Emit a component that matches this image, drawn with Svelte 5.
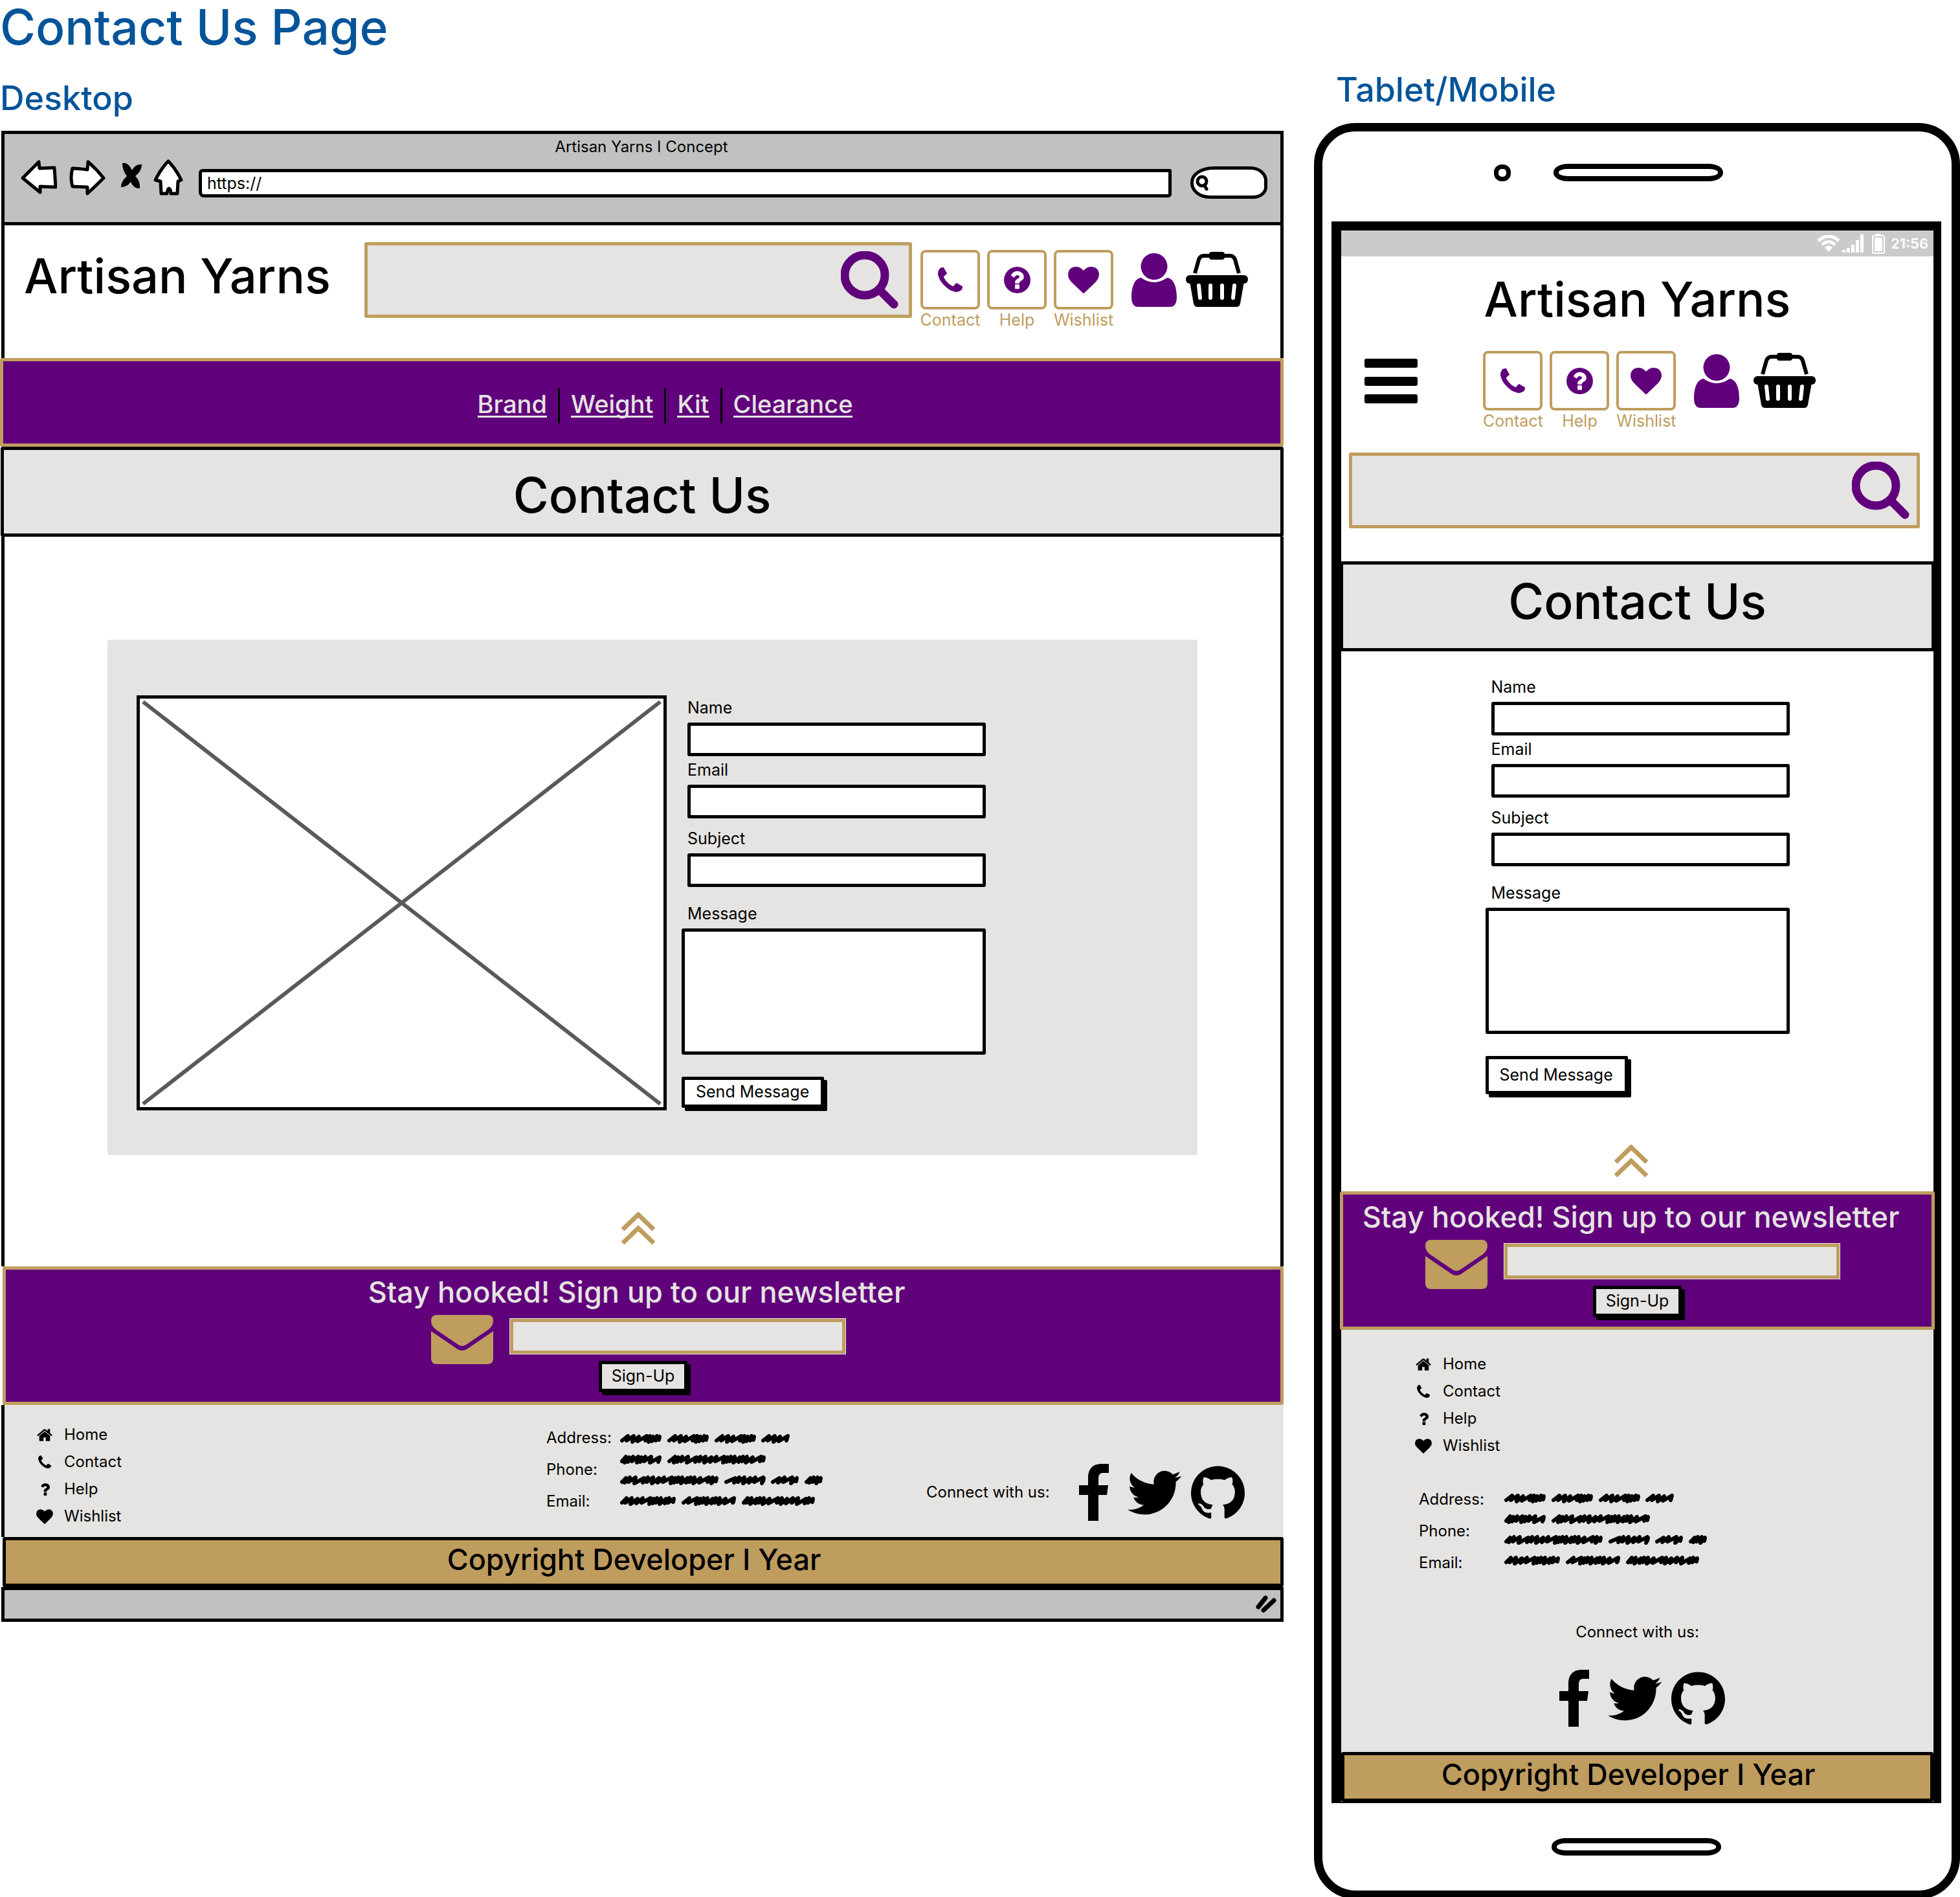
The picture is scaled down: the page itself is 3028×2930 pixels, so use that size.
<script>
  const fields = [
    { id: 'name', label: 'Name' },
    { id: 'email', label: 'Email' },
    { id: 'subject', label: 'Subject' }
  ];

  const footerLinks = [
    { icon: 'home', text: 'Home' },
    { icon: 'phone', text: 'Contact' },
    { icon: 'question', text: 'Help' },
    { icon: 'heart', text: 'Wishlist' }
  ];

  const iconButtons = [
    { icon: 'phone', text: 'Contact', cls: 'i-phone' },
    { icon: 'help', text: 'Help', cls: 'i-help' },
    { icon: 'heart', text: 'Wishlist', cls: 'i-heart' }
  ];

  const icons = {
    phone: {
      box: '192 128 1408 1408',
      d: 'M1600 1240q0 27-10 70.5t-21 68.5q-21 50-122 106-94 51-186 51-27 0-53-3.5t-57.5-12.5-47-14.5-55.5-20.5-49-18q-98-35-175-83-127-79-264-216t-216-264q-48-77-83-175-3-9-18-49t-20.5-55.5-14.5-47-12.5-57.5-3.5-53q0-92 51-186 56-101 106-122 25-11 68.5-21t70.5-10q14 0 21 3 18 6 53 76 11 19 30 54t35 63.5 31 53.5q3 4 17.5 25t21.5 35.5 7 28.5q0 20-28.5 50t-62 55-62 53-28.5 46q0 9 5 22.5t8.5 20.5 14 24 11.5 19q76 137 174 235t235 174q2 1 19 11.5t24 14 20.5 8.5 22.5 5q18 0 46-28.5t53-62 55-62 50-28.5q14 0 28.5 7t35.5 21.5 25 17.5q25 15 53.5 31t63.5 35 54 30q70 35 76 53 3 7 3 21z'
    },
    help: {
      box: '128 128 1536 1536',
      d: 'M1024 1376v-192q0-14-9-23t-23-9h-192q-14 0-23 9t-9 23v192q0 14 9 23t23 9h192q14 0 23-9t9-23zm256-672q0-88-55.5-163t-138.5-116-170-41q-243 0-371 213-15 24 8 42l132 100q7 6 19 6 16 0 25-12 53-68 86-92 34-24 86-24 48 0 85.5 26t37.5 59q0 38-20 61t-68 45q-63 28-115.5 86.5t-52.5 125.5v36q0 14 9 23t23 9h192q14 0 23-9t9-23q0-19 21.5-49.5t54.5-49.5q32-18 49-28.5t46-35 44.5-48 28-60.5 12.5-81zm384 192q0 209-103 385.5t-279.5 279.5-385.5 103-385.5-103-279.5-279.5-103-385.5 103-385.5 279.5-279.5 385.5-103 385.5 103 279.5 279.5 103 385.5z'
    },
    heart: {
      box: '0 128 1792 1536',
      d: 'M896 1664q-26 0-44-18l-624-602q-10-8-27.5-26t-55.5-65.5-68-97.5-53.5-121-23.5-138q0-220 127-344t351-124q62 0 126.5 21.5t120 58 95.5 68.5 76 68q36-36 76-68t95.5-68.5 120-58 126.5-21.5q224 0 351 124t127 344q0 221-229 450l-623 600q-18 18-44 18z'
    },
    home: {
      box: '64 192 1664 1344',
      d: 'M1472 992v480q0 26-19 45t-45 19h-384v-384h-256v384h-384q-26 0-45-19t-19-45v-480q0-1 .5-3t.5-3l575-474 575 474q1 2 1 6zm223-69l-62 74q-8 9-21 11h-3q-13 0-21-7l-692-577-692 577q-12 8-24 7-13-2-21-11l-62-74q-8-10-7-23.5t11-21.5l719-599q32-26 76-26t76 26l244 204v-195q0-14 9-23t23-9h192q14 0 23 9t9 23v408l219 182q10 8 11 21.5t-7 23.5z'
    },
    question: {
      box: '320 192 1152 1344',
      d: 'M1088 1256v240q0 16-12 28t-28 12h-240q-16 0-28-12t-12-28v-240q0-16 12-28t28-12h240q16 0 28 12t12 28zm316-600q0 54-15.5 101t-35 76.5-55 59.5-57.5 43.5-61 35.5q-41 23-68.5 65t-27.5 67q0 17-12 32.5t-28 15.5h-240q-15 0-25.5-18.5t-10.5-37.5v-45q0-83 65-156.5t143-108.5q59-27 84-56t25-76q0-42-46.5-74t-107.5-32q-65 0-108 29-35 25-107 115-13 16-31 16-12 0-25-8l-164-125q-13-10-15.5-25t5.5-28q160-266 464-266 80 0 161 31t146 83 106 127.5 41 158.5z'
    }
  };

  // Each scribbled word is [start, end]; one array for each line.
  const scribbleLines = [
    [[0, 64], [73, 137], [146, 210], [218, 261]],
    [[0, 64], [73, 225]],
    [[0, 152], [161, 225], [233, 276], [285, 313]],
    [[0, 86], [95, 179], [188, 301]]
  ];
  const steps = [9, 10, 9, 13, 6, 6, 7, 9, 6, 7, 10, 14, 7];

  function scribble(start, end, y, seed) {
    let x = start + 3;
    let d = `M${x} ${y + 10}`;
    let i = seed;
    while (x < end - 11) {
      const step = steps[i % steps.length];
      const lift = (i * 5) % 3;
      d += `L${x + step} ${y + 3 + (lift % 2)}L${x + step - 2} ${y + 10 + (lift % 3)}`;
      x += step - 1;
      i += 1;
    }
    d += `L${end - 3} ${y + 4}L${end - 4} ${y + 9}`;
    return d;
  }

  const scribblePath = scribbleLines
    .map((words, row) => words.map(([a, b], k) => scribble(a, b, row * 32, row === 0 ? 0 : row * 4 + k * 3)).join(''))
    .join('');
</script>

{#snippet glyph(name, cls)}
  <svg class={cls} viewBox={icons[name].box} aria-hidden="true"><path d={icons[name].d} fill="currentColor" /></svg>
{/snippet}

{#snippet searchBox(id)}
  <form class="search" role="search">
    <input {id} type="search" aria-label="Search products" />
    <button type="button" class="plain" aria-label="Search">
      <svg class="i-search" viewBox="0 0 89 89" aria-hidden="true">
        <circle cx="37" cy="37" r="31" fill="none" stroke="currentColor" stroke-width="13" />
        <path d="M62 62L82 82" stroke="currentColor" stroke-width="13" stroke-linecap="round" />
      </svg>
    </button>
  </form>
{/snippet}

{#snippet shortcuts()}
  <nav class="shortcuts" aria-label="Shortcuts">
    {#each iconButtons as item}
      <a class="shortcut" href="#top">
        <span class="tile">{@render glyph(item.icon, item.cls)}</span>
        <span class="caption">{item.text}</span>
      </a>
    {/each}
    <a class="account" href="#top" aria-label="Account">
      <svg class="i-user" viewBox="0 0 70 83" aria-hidden="true">
        <circle cx="35" cy="20.5" r="20.5" fill="currentColor" />
        <path d="M15 38Q35 52 55 38C66 39 70 54 70 68C70 78 66 83 60 83H10C4 83 0 78 0 68C0 54 4 39 15 38Z" fill="currentColor" />
      </svg>
    </a>
    <a class="basket" href="#top" aria-label="Basket">
      <svg class="i-basket" viewBox="0 0 96 85" aria-hidden="true">
        <path d="M14 33L20 12Q22 6 28 6H68Q74 6 76 12L82 33" fill="none" stroke="#000" stroke-width="6" />
        <rect x="36" y="0" width="24" height="12" rx="4" />
        <rect x="0" y="36" width="96" height="13" rx="6" />
        <path d="M6 46H90L84 80Q83 85 78 85H18Q13 85 12 80Z" />
        <path d="M20 52L22 71M38 52V71M56 52V71M75 52L73 71" stroke="#fff" stroke-width="6" stroke-linecap="round" />
      </svg>
    </a>
  </nav>
{/snippet}

{#snippet contactForm(prefix)}
  <form class="contact">
    {#each fields as field}
      <div class="field">
        <label for={`${prefix}-${field.id}`}>{field.label}</label>
        <input id={`${prefix}-${field.id}`} type="text" />
      </div>
    {/each}
    <div class="field message">
      <label for={`${prefix}-message`}>Message</label>
      <textarea id={`${prefix}-message`}></textarea>
    </div>
    <button type="button" class="push send">Send Message</button>
  </form>
{/snippet}

{#snippet toTop()}
  <a class="totop" href="#top" aria-label="Back to top">
    <svg class="i-up" viewBox="0 0 54 51" aria-hidden="true">
      <path d="M3 27L27 4L51 27M3 48L27 25L51 48" fill="none" stroke="currentColor" stroke-width="7" />
    </svg>
  </a>
{/snippet}

{#snippet newsletter(prefix)}
  <form class="newsletter">
    <label for={`${prefix}-newsletter`}>Stay hooked! Sign up to our newsletter</label>
    <div class="mailrow">
      <svg class="i-mail" viewBox="0 0 96 76" aria-hidden="true">
        <path d="M9 0H87Q96 0 96 9Q96 17 88 23L54 46Q48 50 42 46L8 23Q0 17 0 9Q0 0 9 0Z" fill="currentColor" />
        <path d="M0 25L41 53Q48 57 55 53L96 25V67Q96 76 87 76H9Q0 76 0 67Z" fill="currentColor" />
      </svg>
      <input id={`${prefix}-newsletter`} type="email" />
    </div>
    <button type="button" class="push signup">Sign-Up</button>
  </form>
{/snippet}

{#snippet siteLinks()}
  <ul class="links">
    {#each footerLinks as link}
      <li>
        <a href="#top"><span class="bullet">{@render glyph(link.icon, `s-${link.icon}`)}</span>{link.text}</a>
      </li>
    {/each}
  </ul>
{/snippet}

{#snippet details()}
  <div class="details">
    <div class="terms">
      <span>Address:</span>
      <span>Phone:</span>
      <span>Email:</span>
    </div>
    <svg class="scribbles" viewBox="0 0 314 112" aria-hidden="true">
      <path d={scribblePath} fill="none" stroke="#000" stroke-width="6" stroke-linecap="round" stroke-linejoin="round" />
    </svg>
  </div>
{/snippet}

{#snippet social()}
  <div class="social">
    <span>Connect with us:</span>
    <div class="networks">
      <a href="#top" aria-label="Facebook">
        <svg class="i-fb" viewBox="0 0 47 88" aria-hidden="true">
          <path d="M46 0H35C20 0 14 9 14 22V33H0V48H14V88H30V48H43L45 33H30V23C30 16 33 14 37 14H46Z" />
        </svg>
      </a>
      <a href="#top" aria-label="Twitter">
        <svg class="i-tw" viewBox="0 2.2 24 19.6" aria-hidden="true">
          <path d="M23.954 4.569c-.885.389-1.83.654-2.825.775 1.014-.611 1.794-1.574 2.163-2.723-.951.555-2.005.959-3.127 1.184-.896-.959-2.173-1.559-3.591-1.559-2.717 0-4.92 2.203-4.92 4.917 0 .39.045.765.127 1.124C7.691 8.094 4.066 6.13 1.64 3.161c-.427.722-.666 1.561-.666 2.475 0 1.71.87 3.213 2.188 4.096-.807-.026-1.566-.248-2.228-.616v.061c0 2.385 1.693 4.374 3.946 4.827-.413.111-.849.171-1.296.171-.314 0-.615-.03-.916-.086.631 1.953 2.445 3.377 4.604 3.417-1.68 1.319-3.809 2.105-6.102 2.105-.39 0-.779-.023-1.17-.067 2.189 1.394 4.768 2.209 7.557 2.209 9.054 0 13.999-7.496 13.999-13.986 0-.209 0-.42-.015-.63.961-.689 1.8-1.56 2.46-2.548l-.047-.02z" />
        </svg>
      </a>
      <a href="#top" aria-label="GitHub">
        <svg class="i-gh" viewBox="0 0.2 24 23.6" aria-hidden="true">
          <path d="M12 .297c-6.63 0-12 5.373-12 12 0 5.303 3.438 9.8 8.205 11.385.6.113.82-.258.82-.577 0-.285-.01-1.04-.015-2.04-3.338.724-4.042-1.61-4.042-1.61C4.422 18.07 3.633 17.7 3.633 17.7c-1.087-.744.084-.729.084-.729 1.205.084 1.838 1.236 1.838 1.236 1.07 1.835 2.809 1.305 3.495.998.108-.776.417-1.305.76-1.605-2.665-.3-5.466-1.332-5.466-5.93 0-1.31.465-2.38 1.235-3.22-.135-.303-.54-1.523.105-3.176 0 0 1.005-.322 3.3 1.23.96-.267 1.98-.399 3-.405 1.02.006 2.04.138 3 .405 2.28-1.552 3.285-1.23 3.285-1.23.645 1.653.24 2.873.12 3.176.765.84 1.23 1.91 1.23 3.22 0 4.61-2.805 5.625-5.475 5.92.42.36.81 1.096.81 2.22 0 1.606-.015 2.896-.015 3.286 0 .315.21.69.825.57C20.565 22.092 24 17.592 24 12.297c0-6.627-5.373-12-12-12" />
        </svg>
      </a>
    </div>
  </div>
{/snippet}

<div class="board" id="top">
  <section class="desktop">
    <h1>Contact Us Page</h1>
    <h2>Desktop</h2>
    <div class="window">
      <div class="chrome">
        <p class="tab">Artisan Yarns I Concept</p>
        <div class="toolbar">
          <div class="tools">
            <button type="button" class="plain" aria-label="Back">
              <svg class="c-back" viewBox="0 0 56 56" aria-hidden="true">
                <path d="M3 29L28 4L29 14L52 13L54 43L30 42V51Z" fill="#fff" stroke="#000" stroke-width="5" stroke-linejoin="round" />
              </svg>
            </button>
            <button type="button" class="plain" aria-label="Forward">
              <svg class="c-forward" viewBox="0 0 58 56" aria-hidden="true">
                <path d="M6 14Q2 28 6 42L29 43V53Q42 41 54 29Q43 15 30 4L29 16Q12 14 6 14Z" fill="#fff" stroke="#000" stroke-width="5" stroke-linejoin="round" />
              </svg>
            </button>
            <button type="button" class="plain" aria-label="Stop">
              <svg class="c-stop" viewBox="0 0 32 56" aria-hidden="true">
                <path d="M2 6Q11 4 17 17Q22 7 32 8Q32 18 22 26Q30 34 29 45Q19 45 15 35Q9 43 0 43Q0 34 9 26Q2 17 2 6Z" />
              </svg>
            </button>
            <button type="button" class="plain" aria-label="Home page">
              <svg class="c-home" viewBox="0 0 46 56" aria-hidden="true">
                <path d="M23 3Q12 14 3 32L11 34L12 53H21Q22 45 24 45Q27 46 27 53H37L38 34L43 32Q34 14 23 3Z" fill="#fff" stroke="#000" stroke-width="5" stroke-linejoin="round" />
              </svg>
            </button>
          </div>
          <input class="url" type="text" value="https://" aria-label="Address bar" />
          <div class="pill">
            <svg class="c-search" viewBox="0 0 24 28" aria-hidden="true">
              <path d="M13 15L18 24" stroke="#000" stroke-width="5" stroke-linecap="round" />
              <circle cx="11" cy="12" r="7" fill="#fff" stroke="#000" stroke-width="5" />
            </svg>
            <input type="search" aria-label="Web search" />
          </div>
        </div>
      </div>

      <header class="masthead">
        <div class="brand">Artisan Yarns</div>
        {@render searchBox('desktop-search')}
        {@render shortcuts()}
      </header>

      <nav class="menu" aria-label="Categories">
        <a href="#top">Brand</a>
        <a href="#top">Weight</a>
        <a href="#top">Kit</a>
        <a href="#top">Clearance</a>
      </nav>

      <h3 class="heading">Contact Us</h3>

      <main class="content">
        <div class="panel">
          <svg class="placeholder" viewBox="0 0 809 631" preserveAspectRatio="none" role="img" aria-label="Image placeholder">
            <path d="M5 5L804 626M804 5L5 626" stroke="#5a5a5a" stroke-width="6" />
          </svg>
          {@render contactForm('desktop')}
        </div>
        {@render toTop()}
      </main>

      {@render newsletter('desktop')}

      <footer class="foot">
        {@render siteLinks()}
        {@render details()}
        {@render social()}
      </footer>
      <p class="copyright">Copyright Developer I Year</p>
      <div class="statusbar">
        <svg class="grip" viewBox="0 0 34 28" aria-hidden="true">
          <path d="M4 18L15 4M12 23L28 8" stroke="#000" stroke-width="7" stroke-linecap="round" />
        </svg>
      </div>
    </div>
  </section>

  <section class="mobile">
    <h2>Tablet/Mobile</h2>
    <div class="phone">
      <div class="earpiece">
        <span class="camera"></span>
        <span class="slot"></span>
      </div>
      <div class="screen">
        <div class="status">
          <svg class="p-wifi" viewBox="0 0 36 26" aria-hidden="true">
            <path d="M2 9Q18 -5 34 9M8 15Q18 6 28 15" fill="none" stroke="#fff" stroke-width="5" />
            <path d="M12 19Q18 14 24 19L18 26Z" fill="#fff" />
          </svg>
          <svg class="p-signal" viewBox="0 0 34 28" aria-hidden="true">
            <path d="M0 24H5V28H0ZM7 21H12V28H7ZM14 16H19V28H14ZM21 9H26V28H21ZM28 0H33V28H28Z" fill="#fff" />
          </svg>
          <svg class="p-battery" viewBox="0 0 20 31" aria-hidden="true">
            <path d="M6 0H14V3H6Z" fill="#fff" />
            <rect x="1" y="3" width="18" height="27" rx="2" fill="none" stroke="#fff" stroke-width="2" />
            <rect x="4" y="6" width="12" height="21" fill="#fff" />
          </svg>
          <span>21:56</span>
        </div>
        <div class="brand">Artisan Yarns</div>
        <div class="actions">
          <button type="button" class="plain burger" aria-label="Menu">
            <svg class="i-burger" viewBox="0 0 82 69" aria-hidden="true">
              <rect width="82" height="14" rx="3" />
              <rect y="28" width="82" height="14" rx="3" />
              <rect y="55" width="82" height="14" rx="3" />
            </svg>
          </button>
          {@render shortcuts()}
        </div>
        {@render searchBox('mobile-search')}
        <h3 class="heading">Contact Us</h3>
        {@render contactForm('mobile')}
        {@render toTop()}
        {@render newsletter('mobile')}
        <footer class="foot">
          {@render siteLinks()}
          {@render details()}
          {@render social()}
        </footer>
        <p class="copyright">Copyright Developer I Year</p>
      </div>
      <div class="homebar"><span class="slot"></span></div>
    </div>
  </section>
</div>

<style>
  :global(body) {
    margin: 0;
    background: #fff;
  }

  .board {
    --gold: #bf9d5e;
    --purple: #60007b;
    --grey: #e5e4e2;
    display: flex;
    align-items: flex-start;
    gap: 46px;
    color: #000;
    font: 25px/30px Inter, 'Liberation Sans', sans-serif;
  }

  .board :is(*) {
    box-sizing: border-box;
  }

  svg {
    display: block;
    flex: none;
  }

  a {
    color: inherit;
    text-decoration: none;
  }

  p,
  h1,
  h2,
  h3,
  ul {
    margin: 0;
    padding: 0;
    font-weight: 500;
  }

  input,
  textarea,
  button {
    margin: 0;
    color: inherit;
    font: inherit;
    outline: none;
  }

  .plain {
    padding: 0;
    border: 0;
    background: none;
  }

  h1,
  h2 {
    color: #055499;
  }

  h1 {
    font-size: 75px;
    line-height: 84px;
  }

  h2 {
    font-size: 52px;
    line-height: 62px;
  }

  .desktop {
    flex: 1984 1 0;
    min-width: 0;
  }

  .desktop h2 {
    margin-top: 37px;
  }

  .mobile {
    flex: 998 1 0;
    min-width: 0;
    padding-top: 108px;
  }

  .mobile h2 {
    padding-left: 34px;
  }

  /* Browser window */
  .window {
    margin: 19px 1px 0 2px;
  }

  .chrome {
    padding: 5px 20px 36px 25px;
    border: 5px solid #000;
    background: #c1c1c1;
  }

  .tab {
    padding-right: 8px;
    font-size: 24px;
    font-weight: 400;
    text-align: center;
  }

  .toolbar {
    display: flex;
    align-items: flex-start;
    margin-top: 4px;
  }

  .tools {
    display: flex;
    gap: 18px;
    margin-right: 24px;
  }

  .c-back { width: 56px; height: 56px; }
  .c-forward { width: 58px; height: 56px; }
  .c-stop { width: 32px; height: 56px; margin-left: 5px; }
  .c-home { width: 46px; height: 56px; }

  .url {
    flex: 1;
    min-width: 0;
    height: 44px;
    margin: 15px 29px 0 0;
    padding: 0 8px;
    border: 5px solid #000;
    border-radius: 6px 3px 5px 8px;
    background: #fff;
  }

  .pill {
    display: flex;
    align-items: center;
    width: 119px;
    height: 50px;
    margin-top: 11px;
    padding-left: 2px;
    border: 5px solid #000;
    border-radius: 36px 26px 22px 30px / 24px 22px 18px 24px;
    background: #fff;
  }

  .c-search { width: 24px; height: 28px; }

  .pill input {
    width: 60px;
    border: 0;
    background: none;
  }

  .masthead {
    display: flex;
    align-items: flex-start;
    height: 205px;
    padding: 0 50px 0 30px;
    border: solid #000;
    border-width: 0 5px;
  }

  .brand {
    font-size: 74px;
    font-weight: 500;
    line-height: 84px;
    white-space: nowrap;
  }

  .masthead .brand {
    flex: 0 0 526px;
    margin-top: 36px;
  }

  .search {
    display: flex;
    align-items: center;
    height: 117px;
    padding-right: 16px;
    border: 5px solid var(--gold);
    border-radius: 3px;
    background: var(--grey);
    color: var(--purple);
  }

  .search input {
    flex: 1;
    min-width: 0;
    height: 100%;
    padding: 0 20px;
    border: 0;
    background: none;
  }

  .i-search { width: 89px; height: 89px; }

  .masthead .search {
    flex: 1;
    margin: 26px 13px 0 0;
  }

  .shortcuts {
    display: flex;
    align-items: flex-start;
    gap: 11px;
    color: var(--purple);
  }

  .masthead .shortcuts {
    margin-top: 38px;
  }

  .shortcut {
    display: flex;
    flex-direction: column;
    align-items: center;
    gap: 1px;
    width: 92px;
    white-space: nowrap;
  }

  .tile {
    display: flex;
    align-items: center;
    justify-content: center;
    width: 92px;
    height: 92px;
    border: 4px solid var(--gold);
    border-radius: 8px;
    background: #fff;
  }

  .caption {
    color: var(--gold);
  }

  .i-phone { width: 38px; height: 38px; }
  .i-help { width: 41px; height: 41px; }
  .i-heart { width: 48px; height: 41px; }
  .i-user { width: 70px; height: 83px; }
  .i-basket { width: 96px; height: 85px; }

  .account {
    margin: 5px 0 0 17px;
  }

  .basket {
    margin: 3px 0 0 3px;
  }

  .menu {
    display: flex;
    align-items: center;
    justify-content: center;
    height: 137px;
    margin-left: -2px;
    padding: 8px 0 0 72px;
    border: 5px solid var(--gold);
    border-radius: 3px;
    background: var(--purple);
    color: var(--grey);
    font-size: 38px;
    font-weight: 500;
    line-height: 36px;
  }

  .menu a {
    border-bottom: 3px solid var(--grey);
  }

  .menu a + a {
    margin-left: 37px;
    position: relative;
  }

  .menu a + a::before {
    content: '';
    position: absolute;
    top: -7px;
    left: -20px;
    width: 3px;
    height: 55px;
    background: #000;
  }

  .heading {
    padding: 28px 0 17px;
    border: 5px solid #000;
    border-radius: 3px;
    background: var(--grey);
    font-size: 75px;
    line-height: 84px;
    text-align: center;
  }

  .window .heading {
    margin-left: -1px;
  }

  .content {
    padding: 159px 128px 33px 159px;
    border: solid #000;
    border-width: 0 5px;
  }

  .panel {
    display: grid;
    grid-template-columns: 819fr 470fr;
    gap: 23px;
    padding: 86px 327px 69px 45px;
    border-radius: 3px;
    background: var(--grey);
  }

  .placeholder {
    width: 100%;
    height: 641px;
    border: 5px solid #000;
    background: #fff;
  }

  .contact {
    display: flex;
    flex-direction: column;
    align-items: stretch;
    padding-top: 4px;
  }

  .field {
    display: flex;
    flex-direction: column;
    gap: 8px;
    padding-left: 9px;
  }

  .field:nth-child(2) {
    margin-top: 6px;
  }

  .field:nth-child(3) {
    margin-top: 16px;
  }

  .field.message {
    margin-top: 26px;
    padding-left: 0;
  }

  .message label {
    padding-left: 9px;
  }

  .field input,
  .field textarea {
    width: 100%;
    height: 52px;
    padding: 0 10px;
    border: 5px solid #000;
    border-radius: 3px;
    background: #fff;
    resize: none;
  }

  .field textarea {
    height: 195px;
  }

  .push {
    align-self: flex-start;
    height: 48px;
    padding: 0 18px 2px 17px;
    border: 5px solid #000;
    border-radius: 2px;
    background: #fff;
    box-shadow: 5px 5px 0 #000;
    line-height: 36px;
  }

  .send {
    margin-top: 34px;
  }

  .totop {
    display: flex;
    justify-content: center;
    color: var(--gold);
  }

  .i-up { width: 54px; height: 51px; }

  .content .totop {
    margin-top: 88px;
    padding-left: 18px;
    padding-right: 63px;
  }

  .newsletter {
    display: flex;
    flex-direction: column;
    align-items: center;
    padding: 10px 0 15px;
    border: 5px solid var(--gold);
    border-radius: 3px;
    background: var(--purple);
    color: var(--grey);
  }

  .newsletter label {
    padding-right: 20px;
    font-size: 45px;
    font-weight: 500;
    line-height: 50px;
    white-space: nowrap;
  }

  .window .newsletter,
  .window .copyright {
    margin-left: 2px;
  }

  .mailrow {
    display: flex;
    gap: 26px;
    margin: 10px 0 -5px;
    padding-right: 16px;
    color: var(--gold);
  }

  .i-mail { width: 96px; height: 76px; }

  .mailrow input {
    width: 518px;
    height: 54px;
    margin-top: 6px;
    padding: 0 10px;
    border: 5px solid var(--gold);
    border-radius: 0;
    outline: 1px solid var(--grey);
    background: var(--grey);
    color: #000;
  }

  .signup {
    align-self: center;
    padding: 0 15px 2px;
    background: var(--grey);
    color: #000;
  }

  .foot {
    background: var(--grey);
    font-size: 24px;
  }

  .window .foot {
    display: grid;
    grid-template-columns: 788fr 587fr 492fr;
    height: 204px;
    padding: 0 60px 0 49px;
    border-left: 5px solid #000;
  }

  .links {
    list-style: none;
    font-weight: 400;
    line-height: 42px;
  }

  .window .links {
    padding-top: 25px;
  }

  .links a {
    display: flex;
    align-items: center;
    gap: 17px;
  }

  .bullet {
    display: flex;
    justify-content: center;
    width: 26px;
  }

  .board :global(.s-home) { width: 24px; height: 20px; }
  .board :global(.s-phone) { width: 20px; height: 20px; }
  .board :global(.s-question) { width: 17px; height: 20px; }
  .board :global(.s-heart) { width: 26px; height: 23px; }

  .details {
    display: flex;
    align-items: flex-start;
  }

  .terms {
    display: flex;
    flex-direction: column;
    gap: 19px;
    width: 114px;
  }

  .scribbles {
    width: 314px;
    height: 112px;
    margin-top: 9px;
  }

  .window .details {
    padding-top: 36px;
  }

  .social {
    display: flex;
    align-items: center;
    white-space: nowrap;
  }

  .networks {
    display: flex;
    align-items: center;
  }

  .networks a + a {
    margin-left: 28px;
  }

  .networks a + a + a {
    margin-left: 15px;
  }

  .i-fb { width: 47px; height: 88px; }
  .i-tw { width: 83px; height: 69px; }
  .i-gh { width: 83px; height: 82px; }

  .window .social {
    justify-content: space-between;
    padding-top: 66px;
  }

  .copyright {
    height: 77px;
    padding-right: 28px;
    border: 5px solid #000;
    border-radius: 3px;
    background: var(--gold);
    font-size: 45px;
    line-height: 60px;
    text-align: center;
  }

  .statusbar {
    display: flex;
    align-items: center;
    justify-content: flex-end;
    height: 54px;
    padding-right: 4px;
    border: 5px solid #000;
    background: #c1c1c1;
  }

  .grip { width: 34px; height: 28px; }

  /* Phone */
  .phone {
    margin-top: 20px;
    padding: 0 16px 0 14px;
    border: 13px solid #000;
    border-radius: 64px;
    background: #fff;
  }

  .earpiece {
    display: grid;
    grid-template-columns: 1fr auto 1fr;
    align-items: center;
    height: 139px;
    padding: 0 0 12px 6px;
  }

  .camera {
    justify-self: end;
    width: 26px;
    height: 26px;
    margin-right: 66px;
    border: 7px solid #000;
    border-radius: 12px;
  }

  .slot {
    width: 262px;
    height: 27px;
    border: 8px solid #000;
    border-radius: 22px / 13px;
  }

  .screen {
    border: solid #000;
    border-width: 14px 12px 2px 15px;
  }

  .status {
    display: flex;
    align-items: center;
    justify-content: flex-end;
    height: 40px;
    padding-right: 8px;
    background: #cbcbcb;
    color: #fff;
    font-size: 22px;
    font-weight: 600;
  }

  .p-wifi { width: 36px; height: 26px; margin-right: 3px; }
  .p-signal { width: 34px; height: 28px; margin-right: 12px; }
  .p-battery { width: 20px; height: 31px; margin-right: 9px; }

  .screen .brand {
    margin-top: 24px;
    text-align: center;
  }

  .actions {
    display: grid;
    grid-template-columns: 220fr auto 182fr;
    align-items: flex-start;
    height: 124px;
    margin-top: 38px;
  }

  .actions .basket {
    margin-left: 11px;
  }

  .burger {
    justify-self: start;
    margin: 12px 0 0 36px;
  }

  .i-burger { width: 82px; height: 69px; }

  .screen .search {
    margin: 33px 21px 51px 12px;
    padding-right: 11px;
  }

  .screen .heading {
    margin: 0 -2px;
    padding: 15px 0 30px;
  }

  .screen .contact {
    width: 470px;
    margin: 36px auto 0;
  }

  .screen .send {
    height: 59px;
  }

  .screen .totop {
    margin: 78px 20px 21px 0;
  }

  .screen .newsletter {
    margin: 0 -2px;
  }

  .screen .foot {
    padding: 32px 0 39px;
  }

  .screen .links {
    padding-left: 114px;
  }

  .screen .details {
    padding: 47px 0 0 120px;
  }

  .screen .terms {
    width: 132px;
  }

  .screen .scribbles {
    margin-top: 6px;
  }

  .screen .social {
    flex-direction: column;
    gap: 43px;
    margin-top: 77px;
  }

  .screen .networks {
    padding-left: 14px;
  }

  .homebar {
    display: flex;
    align-items: center;
    justify-content: center;
    height: 135px;
  }

  @media (max-width: 1600px) {
    .board {
      flex-wrap: wrap;
    }

    .desktop,
    .mobile {
      flex-basis: 100%;
    }
  }
</style>
